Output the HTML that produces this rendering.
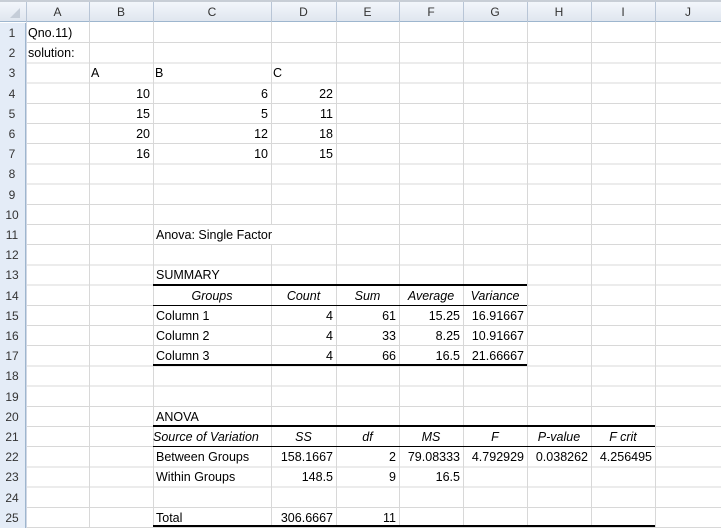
<!DOCTYPE html>
<html><head><style>
body{margin:0;width:721px;height:528px;overflow:hidden;background:#fff;font-family:"Liberation Sans",sans-serif;font-size:12.5px;color:#000;position:relative}
.grid{position:absolute;left:0;top:0;width:721px;height:528px;
background-image:
linear-gradient(to right,transparent 26px,#d0d7e5 26px,#d0d7e5 27px,transparent 27px),
repeating-linear-gradient(to bottom,transparent 0,transparent 19.2px,#d8d8d8 19.2px,#d8d8d8 20.2px);
background-position:0 0,0 23px;background-repeat:no-repeat,repeat;}
.v{position:absolute;top:0;width:1px;height:528px;background:#d8d8d8}
.hdr{position:absolute;left:0;top:0;width:721px;height:22px;background:linear-gradient(#f3f6fb,#e0e6ef);border-bottom:1px solid #9eb6ce;border-top:2px solid #c8ced6;box-sizing:border-box}
.rn{position:absolute;left:0;top:23px;width:26px;height:505px;background:#e4ecf7;border-right:1px solid #9eb6ce;box-sizing:border-box}
.h{position:absolute;top:3px;height:19px;line-height:19px;text-align:center;color:#333;font-size:12px}
.hv{position:absolute;top:2px;height:20px;width:1px;background:#b8c5d6}
.r{position:absolute;left:0;width:24px;height:20px;line-height:20px;text-align:center;color:#333;font-size:12px}
.c{position:absolute;height:20px;line-height:21px;white-space:nowrap}
.w{background:#fff;height:19px;padding-right:3px}
.rt{text-align:right}.ce{text-align:center}.i{font-style:italic}
.b{position:absolute;background:#000}
</style></head><body>
<div class="grid"></div>
<div class="v" style="left:89px"></div><div class="v" style="left:153px"></div><div class="v" style="left:271px"></div><div class="v" style="left:336px"></div><div class="v" style="left:399px"></div><div class="v" style="left:463px"></div><div class="v" style="left:527px"></div><div class="v" style="left:591px"></div><div class="v" style="left:655px"></div>
<div class="hdr"></div>
<div class="h" style="left:26px;width:63px">A</div><div class="h" style="left:89px;width:64px">B</div><div class="h" style="left:153px;width:118px">C</div><div class="h" style="left:271px;width:65px">D</div><div class="h" style="left:336px;width:63px">E</div><div class="h" style="left:399px;width:64px">F</div><div class="h" style="left:463px;width:64px">G</div><div class="h" style="left:527px;width:64px">H</div><div class="h" style="left:591px;width:64px">I</div><div class="h" style="left:655px;width:66px">J</div>
<div class="hv" style="left:26px"></div><div class="hv" style="left:89px"></div><div class="hv" style="left:153px"></div><div class="hv" style="left:271px"></div><div class="hv" style="left:336px"></div><div class="hv" style="left:399px"></div><div class="hv" style="left:463px"></div><div class="hv" style="left:527px"></div><div class="hv" style="left:591px"></div><div class="hv" style="left:655px"></div>
<div style="position:absolute;left:10px;top:8px;width:0;height:0;border-left:10px solid transparent;border-bottom:10px solid #c5cdd8"></div>
<div class="rn"></div>
<div class="r" style="top:23px">1</div><div class="r" style="top:43.2px">2</div><div class="r" style="top:63.4px">3</div><div class="r" style="top:83.6px">4</div><div class="r" style="top:103.8px">5</div><div class="r" style="top:124px">6</div><div class="r" style="top:144.2px">7</div><div class="r" style="top:164.4px">8</div><div class="r" style="top:184.6px">9</div><div class="r" style="top:204.8px">10</div><div class="r" style="top:225px">11</div><div class="r" style="top:245.2px">12</div><div class="r" style="top:265.4px">13</div><div class="r" style="top:285.6px">14</div><div class="r" style="top:305.8px">15</div><div class="r" style="top:326px">16</div><div class="r" style="top:346.2px">17</div><div class="r" style="top:366.4px">18</div><div class="r" style="top:386.6px">19</div><div class="r" style="top:406.8px">20</div><div class="r" style="top:427px">21</div><div class="r" style="top:447.2px">22</div><div class="r" style="top:467.4px">23</div><div class="r" style="top:487.6px">24</div><div class="r" style="top:507.8px">25</div>

<div class="c" style="left:28px;top:23px">Qno.11)</div>
<div class="c" style="left:28px;top:43.2px">solution:</div>
<div class="c" style="left:91px;top:63.4px">A</div><div class="c" style="left:155px;top:63.4px">B</div><div class="c" style="left:273px;top:63.4px">C</div>
<div class="c rt" style="left:89px;width:61px;top:83.6px">10</div><div class="c rt" style="left:153px;width:115px;top:83.6px">6</div><div class="c rt" style="left:271px;width:62px;top:83.6px">22</div>
<div class="c rt" style="left:89px;width:61px;top:103.8px">15</div><div class="c rt" style="left:153px;width:115px;top:103.8px">5</div><div class="c rt" style="left:271px;width:62px;top:103.8px">11</div>
<div class="c rt" style="left:89px;width:61px;top:124px">20</div><div class="c rt" style="left:153px;width:115px;top:124px">12</div><div class="c rt" style="left:271px;width:62px;top:124px">18</div>
<div class="c rt" style="left:89px;width:61px;top:144.2px">16</div><div class="c rt" style="left:153px;width:115px;top:144.2px">10</div><div class="c rt" style="left:271px;width:62px;top:144.2px">15</div>
<div class="c w" style="left:156px;top:225px">Anova: Single Factor</div>
<div class="c" style="left:156px;top:265.4px">SUMMARY</div>
<div class="c ce i" style="left:153px;width:118px;top:285.6px">Groups</div><div class="c ce i" style="left:271px;width:65px;top:285.6px">Count</div><div class="c ce i" style="left:336px;width:63px;top:285.6px">Sum</div><div class="c ce i" style="left:399px;width:64px;top:285.6px">Average</div><div class="c ce i" style="left:463px;width:64px;top:285.6px">Variance</div>
<div class="c" style="left:156px;top:305.8px">Column 1</div><div class="c rt" style="left:271px;width:62px;top:305.8px">4</div><div class="c rt" style="left:336px;width:60px;top:305.8px">61</div><div class="c rt" style="left:399px;width:61px;top:305.8px">15.25</div><div class="c rt" style="left:463px;width:61px;top:305.8px">16.91667</div>
<div class="c" style="left:156px;top:326px">Column 2</div><div class="c rt" style="left:271px;width:62px;top:326px">4</div><div class="c rt" style="left:336px;width:60px;top:326px">33</div><div class="c rt" style="left:399px;width:61px;top:326px">8.25</div><div class="c rt" style="left:463px;width:61px;top:326px">10.91667</div>
<div class="c" style="left:156px;top:346.2px">Column 3</div><div class="c rt" style="left:271px;width:62px;top:346.2px">4</div><div class="c rt" style="left:336px;width:60px;top:346.2px">66</div><div class="c rt" style="left:399px;width:61px;top:346.2px">16.5</div><div class="c rt" style="left:463px;width:61px;top:346.2px">21.66667</div>
<div class="b" style="left:153px;top:284px;width:374px;height:2px"></div>
<div class="b" style="left:153px;top:305px;width:374px;height:1px"></div>
<div class="b" style="left:153px;top:364px;width:374px;height:2px"></div>

<div class="c" style="left:156px;top:406.8px">ANOVA</div>
<div class="c i" style="left:153px;top:427px">Source of Variation</div><div class="c ce i" style="left:271px;width:65px;top:427px">SS</div><div class="c ce i" style="left:336px;width:63px;top:427px">df</div><div class="c ce i" style="left:399px;width:64px;top:427px">MS</div><div class="c ce i" style="left:463px;width:64px;top:427px">F</div><div class="c ce i" style="left:527px;width:64px;top:427px">P-value</div><div class="c ce i" style="left:591px;width:64px;top:427px">F crit</div>
<div class="c" style="left:156px;top:447.2px">Between Groups</div><div class="c rt" style="left:271px;width:62px;top:447.2px">158.1667</div><div class="c rt" style="left:336px;width:60px;top:447.2px">2</div><div class="c rt" style="left:399px;width:61px;top:447.2px">79.08333</div><div class="c rt" style="left:463px;width:61px;top:447.2px">4.792929</div><div class="c rt" style="left:527px;width:61px;top:447.2px">0.038262</div><div class="c rt" style="left:591px;width:61px;top:447.2px">4.256495</div>
<div class="c" style="left:156px;top:467.4px">Within Groups</div><div class="c rt" style="left:271px;width:62px;top:467.4px">148.5</div><div class="c rt" style="left:336px;width:60px;top:467.4px">9</div><div class="c rt" style="left:399px;width:61px;top:467.4px">16.5</div>
<div class="c" style="left:156px;top:507.8px">Total</div><div class="c rt" style="left:271px;width:62px;top:507.8px">306.6667</div><div class="c rt" style="left:336px;width:60px;top:507.8px">11</div>
<div class="b" style="left:153px;top:425px;width:502px;height:2px"></div>
<div class="b" style="left:153px;top:446px;width:502px;height:1px"></div>
<div class="b" style="left:153px;top:525px;width:502px;height:2px"></div>
</body></html>
